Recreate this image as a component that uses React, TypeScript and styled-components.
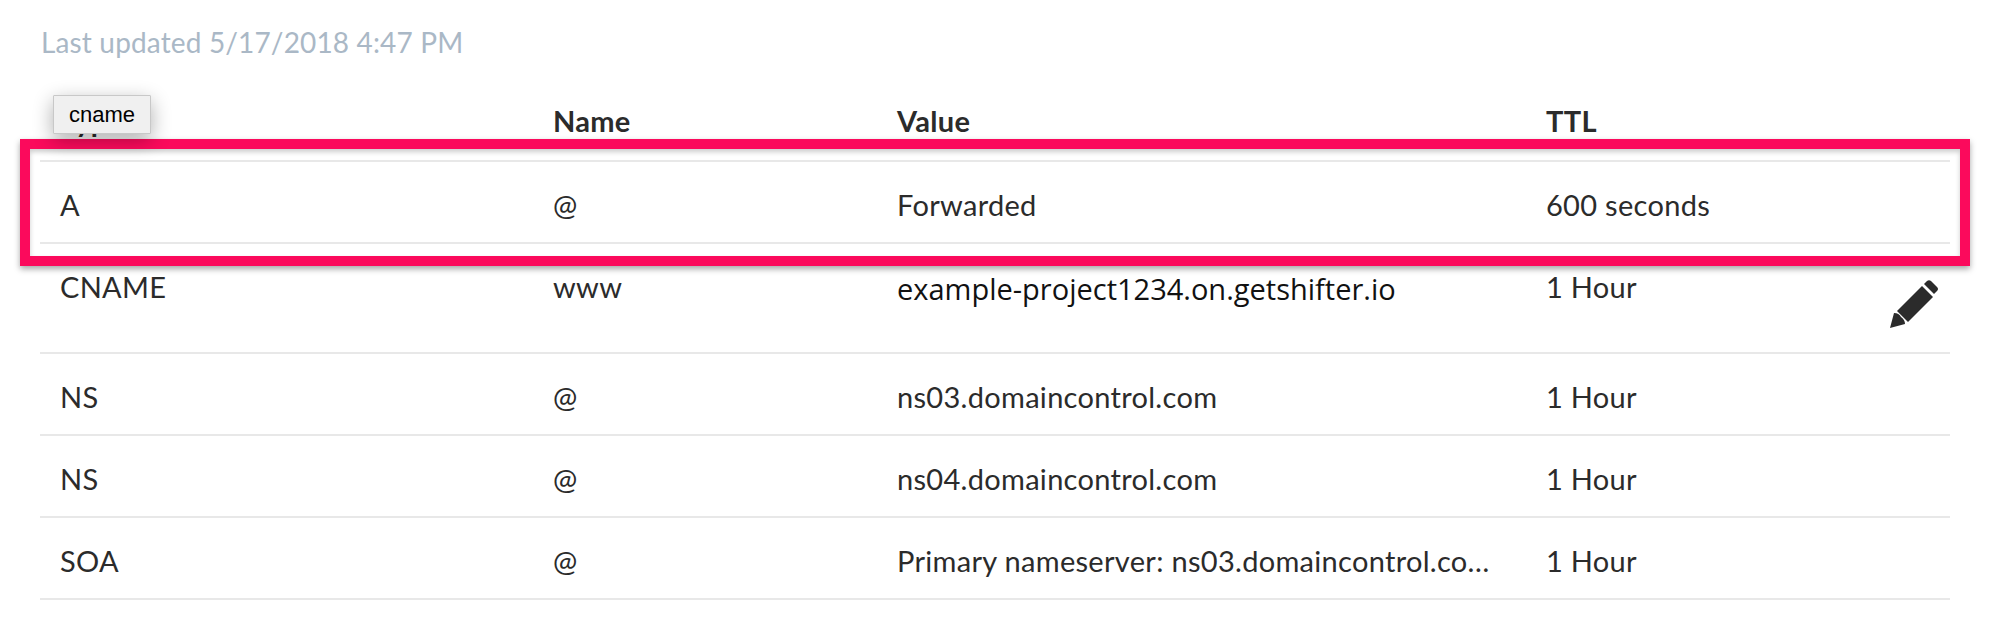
import React from "react";
import styled, { createGlobalStyle } from "styled-components";

const GlobalStyle = createGlobalStyle`
  html, body {
    margin: 0;
    padding: 0;
    background: #fff;
  }
`;

const Page = styled.main`
  position: relative;
  width: 2012px;
  height: 640px;
  overflow: hidden;
  box-sizing: border-box;
  padding: 24px 62px 0 40px;
  font-family: "Lato", "Liberation Sans", sans-serif;
  font-size: 29px;
  letter-spacing: 0.3px;
  color: #2b2b2b;
`;

const Updated = styled.p`
  margin: 0 0 0 1px;
  height: 36px;
  line-height: 36px;
  font-size: 28px;
  letter-spacing: 0.15px;
  color: #aab8c6;
`;

const Table = styled.section`
  margin-top: 40px;
`;

const Row = styled.div<{ $height: number; $head?: boolean }>`
  display: grid;
  grid-template-columns: 493px 344px 649px 424px;
  height: ${(p) => p.$height}px;
  box-sizing: border-box;
  border-bottom: 2px solid #e8e8e8;
  font-weight: ${(p) => (p.$head ? 700 : 400)};
`;

const Cell = styled.div<{ $top: number }>`
  padding: ${(p) => p.$top}px 20px 0;
  line-height: 34px;
  min-width: 0;
  white-space: nowrap;
  overflow: hidden;
  text-overflow: ellipsis;
`;

const HostValue = styled.span`
  font-family: "Open Sans", sans-serif;
  font-size: 29px;
  letter-spacing: 0;
  vertical-align: -2px;
  color: #111;
`;

const LastCell = styled(Cell)`
  display: flex;
  justify-content: space-between;
  overflow: visible;
`;

const EditIcon = styled.svg`
  width: 49px;
  height: 48px;
  margin: 10px -9px 0 0;
  fill: #2b2b2b;
`;

const Highlight = styled.div`
  position: absolute;
  left: 20px;
  top: 139px;
  width: 1950px;
  height: 127px;
  box-sizing: border-box;
  border: 10px solid #fb0a5c;
  box-shadow: 0 3px 6px rgba(0, 0, 0, 0.35), inset 0 3px 5px rgba(0, 0, 0, 0.2);
`;

const Tooltip = styled.div`
  position: absolute;
  left: 53px;
  top: 95px;
  width: 98px;
  height: 39px;
  box-sizing: border-box;
  display: flex;
  align-items: center;
  justify-content: center;
  background: #f0f0f0;
  border: 1px solid #c8c8c8;
  border-radius: 1px;
  font-family: "Liberation Sans", Arial, sans-serif;
  font-size: 22px;
  letter-spacing: 0;
  color: #000;
  box-shadow: 0 6px 20px rgba(0, 0, 0, 0.32);
`;

const rows = [
  { type: "A", name: "@", value: "Forwarded", ttl: "600 seconds", height: 82 },
  { type: "CNAME", name: "www", value: "example-project1234.on.getshifter.io", ttl: "1 Hour", height: 110, host: true, edit: true },
  { type: "NS", name: "@", value: "ns03.domaincontrol.com", ttl: "1 Hour", height: 82 },
  { type: "NS", name: "@", value: "ns04.domaincontrol.com", ttl: "1 Hour", height: 82 },
  { type: "SOA", name: "@", value: "Primary nameserver: ns03.domaincontrol.com. Hostmaster: dns.jomax.net.", ttl: "1 Hour", height: 82 },
];

const App = () => (
  <Page>
    <GlobalStyle />
    <Updated>Last updated 5/17/2018 4:47 PM</Updated>
    <Table>
      <Row $height={62} $head>
        <Cell $top={4}>Type</Cell>
        <Cell $top={4}>Name</Cell>
        <Cell $top={4}>Value</Cell>
        <Cell $top={4}>TTL</Cell>
      </Row>
      {rows.map((r, i) => (
        <Row key={i} $height={r.height}>
          <Cell $top={26}>{r.type}</Cell>
          <Cell $top={26}>{r.name}</Cell>
          <Cell $top={26}>{r.host ? <HostValue>{r.value}</HostValue> : r.value}</Cell>
          <LastCell $top={26}>
            <span>{r.ttl}</span>
            {r.edit && (
              <EditIcon viewBox="0 0 49 48">
                <path d="M0 48 L4 33 Q9 33 11 37 Q15 40 15 44 Z" />
                <path d="M7 31 L32 6 L43 17 L18 42 Z" />
                <path d="M34 4 L37 1 Q39 -0.5 41 1 L47 7 Q49 9 47 11 L44 14 Z" />
              </EditIcon>
            )}
          </LastCell>
        </Row>
      ))}
    </Table>
    <Highlight />
    <Tooltip>cname</Tooltip>
  </Page>
);

export default App;
